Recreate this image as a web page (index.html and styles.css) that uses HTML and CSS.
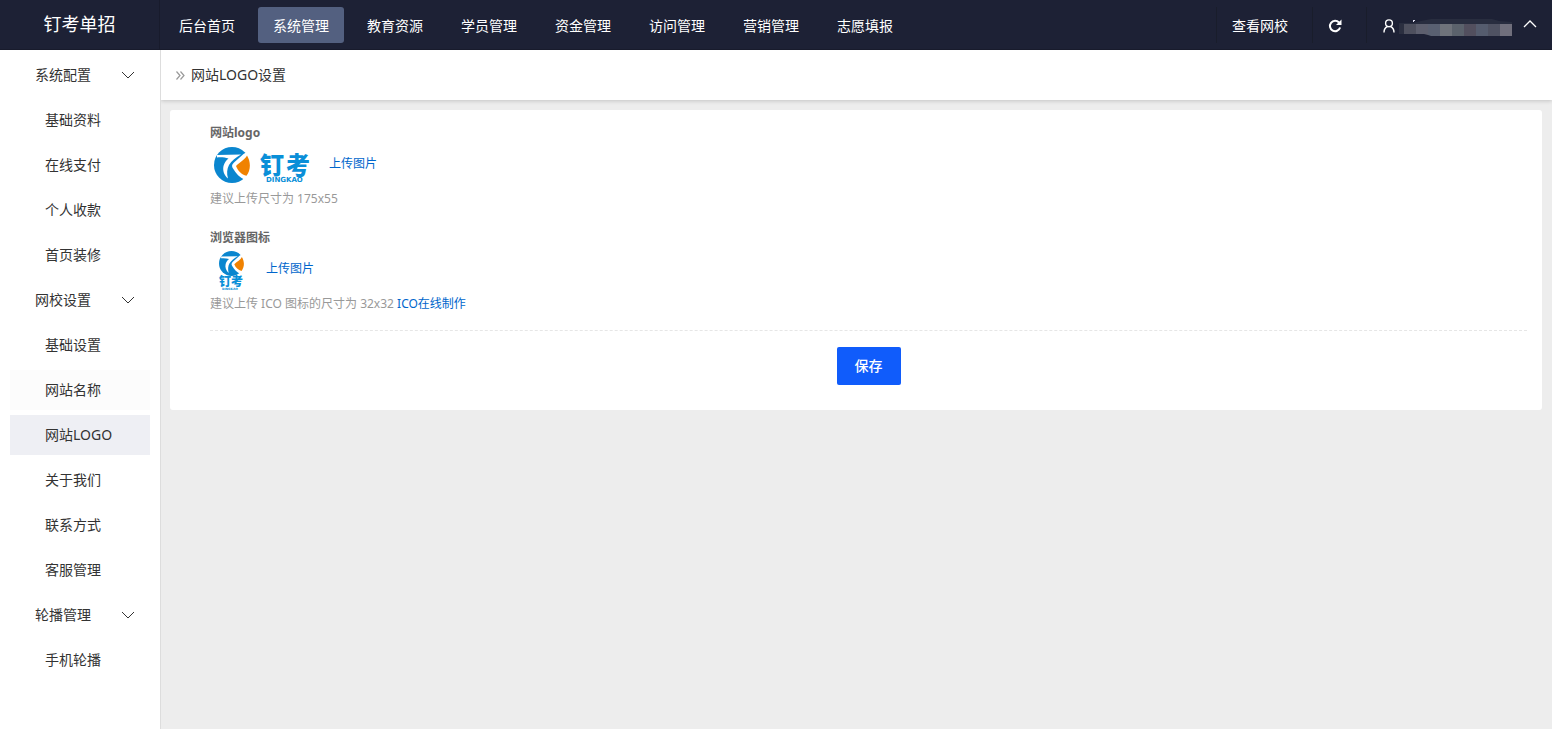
FILE: index.html
```html
<!DOCTYPE html>
<html lang="zh-CN">
<head>
<meta charset="utf-8">
<title>网站LOGO设置</title>
<link rel="stylesheet" href="styles.css">
</head>
<body>
<svg class="defs" aria-hidden="true">
  <symbol id="mark" viewBox="0 0 36 36">
    <circle cx="18" cy="18" r="18" fill="#0a86cf"/>
    <path d="M3 8 L27 7.500 C22 10.500 17.500 13.500 15 18 C13 22 12.500 26 14 31.500 C10 28 8.500 23.500 9.500 19 C10.500 15.500 12 13.500 14.500 11.500 C11 10.500 7 10 3 10.500 Z" fill="#fff"/>
    <path d="M29.500 7 L20 15.500 C17.800 17.500 17.500 19.500 19 21.500 C22 26.500 25.500 30.500 31 33 L37 29 L37 7 L32 5.500 Z" fill="#fff"/>
    <path d="M33 8.500 C31 12.500 26 15 22 19 C24 24 27.500 27.500 32.500 28.700 C36.800 23 37 15 33 8.500 Z" fill="#f08200"/>
  </symbol>
  <symbol id="down" viewBox="0 0 14 14">
    <path d="M1 4 L7 10 L13 4" fill="none" stroke="currentColor"/>
  </symbol>
</svg>

<header class="topbar">
  <div class="brand">钉考单招</div>
  <nav class="nav">
    <a href="#">后台首页</a>
    <a href="#" class="on">系统管理</a>
    <a href="#">教育资源</a>
    <a href="#">学员管理</a>
    <a href="#">资金管理</a>
    <a href="#">访问管理</a>
    <a href="#">营销管理</a>
    <a href="#">志愿填报</a>
  </nav>
  <div class="tools">
    <a href="#" class="tool">查看网校</a>
    <button type="button" class="tool" aria-label="刷新">
      <svg width="14" height="14" viewBox="0 0 14 14"><path d="M11 3.500 A5.200 5.200 0 1 0 12.100 8.500" fill="none" stroke="#fff" stroke-width="2"/><path d="M13.500 0.500 V6 H8 Z" fill="#fff"/></svg>
    </button>
    <button type="button" class="tool user" aria-label="账户">
      <svg width="12" height="14" viewBox="0 0 12 14"><g fill="none" stroke="#fff" stroke-width="1.400"><circle cx="6" cy="4.300" r="3.400"/><path d="M1 13.500 C1 10.500 2.500 8.300 4.600 7.500 M11 13.500 C11 10.500 9.500 8.300 7.400 7.500"/></g></svg>
      <svg class="mask" width="113" height="18" viewBox="0 0 113 18">
        <path d="M0 5 H14 L22 3 L32 1 H93 L100 3 L113 4 V8 H0 Z" fill="#282d3f"/>
        <path d="M0 6 H5 V16 H0 Z" fill="#2b2f40"/>
        <path d="M5 6 H17 V16 H5 Z" fill="#4e505e"/>
        <path d="M17 6 H29 V17 L25 16 H17 Z" fill="#5d5f6e"/>
        <path d="M29 6 H41 V18 H32 L29 17 Z" fill="#596071"/>
        <path d="M41 6 H53 V18 H41 Z" fill="#6f737b"/>
        <path d="M53 6 H65 V18 H53 Z" fill="#5b626c"/>
        <path d="M65 6 H77 V18 H65 Z" fill="#524f5e"/>
        <path d="M77 6 H89 V18 H77 Z" fill="#555c6e"/>
        <path d="M89 6 H101 V18 H89 Z" fill="#4f5262"/>
        <path d="M101 6 H113 V18 H101 Z" fill="#706f7c"/>
        <path d="M14 2 h2 v1 h-1 v1 h-1 Z" fill="#dde"/>
      </svg>
      <svg class="up" width="14" height="14" viewBox="0 0 14 14"><path d="M1 9 L7 3 L13 9" fill="none" stroke="#fff" stroke-width="1.300"/></svg>
    </button>
  </div>
</header>

<div class="body">
  <aside class="side">
    <button type="button" class="group">系统配置<svg width="14" height="14"><use href="#down"/></svg></button>
    <a href="#">基础资料</a>
    <a href="#">在线支付</a>
    <a href="#">个人收款</a>
    <a href="#">首页装修</a>
    <button type="button" class="group">网校设置<svg width="14" height="14"><use href="#down"/></svg></button>
    <a href="#">基础设置</a>
    <a href="#" class="faded">网站名称</a>
    <a href="#" class="on">网站LOGO</a>
    <a href="#">关于我们</a>
    <a href="#">联系方式</a>
    <a href="#">客服管理</a>
    <button type="button" class="group">轮播管理<svg width="14" height="14"><use href="#down"/></svg></button>
    <a href="#">手机轮播</a>
  </aside>

  <main class="main">
    <h1 class="crumb">
      <svg width="9" height="10" viewBox="0 0 9 10"><path d="M0.500 1.500 L4 5.500 L0.500 9.500 M4.500 1.500 L8 5.500 L4.500 9.500" fill="none" stroke="#999" stroke-width="1.200"/></svg>
      网站LOGO设置
    </h1>
    <form class="card">
      <section class="field">
        <h2>网站logo</h2>
        <div class="pic">
          <svg class="wide" width="111" height="42" viewBox="0 0 111 42" role="img" aria-label="钉考">
            <use href="#mark" x="4" y="4" width="36" height="36"/>
            <text class="logo-cn" x="50 76" y="31" font-size="24">钉考</text>
            <text class="logo-en" x="56" y="39" font-size="7">DINGKAO</text>
          </svg>
          <a href="#">上传图片</a>
        </div>
        <p>建议上传尺寸为 175x55</p>
      </section>
      <section class="field">
        <h2>浏览器图标</h2>
        <div class="pic">
          <svg class="small" width="40" height="42" viewBox="0 0 40 42" role="img" aria-label="钉考">
            <use href="#mark" x="9" y="3" width="25" height="25"/>
            <text class="logo-cn" x="9" y="38" font-size="12">钉考</text>
            <text class="logo-en" x="12" y="42" font-size="3">DINGKAO</text>
          </svg>
          <a href="#">上传图片</a>
        </div>
        <p>建议上传 ICO 图标的尺寸为 32x32 <a href="#">ICO在线制作</a></p>
      </section>
      <div class="actions"><button type="submit">保存</button></div>
    </form>
  </main>
</div>
</body>
</html>
```
FILE: styles.css
```css
* { box-sizing: border-box; }

body {
  margin: 0;
  min-height: 100vh;
  display: flex;
  flex-direction: column;
  font: 14px/20px "Noto Sans", "Noto Sans CJK SC", sans-serif;
  color: #333;
  background: #ededed;
}

a { color: inherit; text-decoration: none; }
button { font: inherit; color: inherit; border: 0; background: none; padding: 0; cursor: pointer; }
h1, h2, p { margin: 0; }
svg { flex: none; }
.defs { position: absolute; width: 0; height: 0; }

.topbar {
  display: flex;
  height: 50px;
  background: #1d2135;
  border-bottom: 1px solid #181b2c;
  color: #fff;
}
.brand {
  width: 160px;
  border-right: 1px solid #181b2c;
  font-size: 18px;
  line-height: 48px;
  text-align: center;
}
.nav { flex: 1; display: flex; align-items: center; gap: 8px; padding-left: 4px; }
.nav a { padding: 2px 15px 0; line-height: 34px; border-radius: 3px; }
.nav .on { background: #536080; }

.tools { display: flex; align-items: center; }
.tool {
  display: flex;
  align-items: center;
  height: 36px;
  padding: 2px 24px 0 15px;
  border-left: 1px solid #191d2b;
}
.user { padding: 2px 15px 0 16px; }
.mask { margin: 2px 11px 0 4px; }
.up { margin-bottom: 2px; }

.body { flex: 1; display: flex; }

.side {
  width: 161px;
  padding: 5px 10px;
  background: #fff;
  border-right: 1px solid #ddd;
}
.side a, .group {
  display: flex;
  align-items: center;
  width: 140px;
  height: 40px;
  margin-bottom: 5px;
  padding-left: 35px;
}
.side .group { justify-content: space-between; padding: 0 15px 0 25px; }
.side .on { background: #eeeff4; }
.side .faded { background: #fcfcfc; }

.main { flex: 1; }
.crumb {
  display: flex;
  align-items: center;
  gap: 6px;
  height: 50px;
  padding-left: 15px;
  background: #fff;
  box-shadow: 0 1px 4px rgba(0, 0, 0, 0.18);
  clip-path: inset(0 0 -8px 0);
  font-size: 14px;
  font-weight: 400;
}

.card {
  margin: 10px 10px 10px 9px;
  padding: 13px 15px 25px 40px;
  background: #fff;
  border-radius: 3px;
  font-size: 12px;
}
.field { margin-bottom: 15px; }
.field h2 { font-size: 12px; line-height: 20px; font-weight: 700; color: #666; }
.field p { line-height: 28px; color: #999; }
.field a { color: #0066cc; }
.pic { display: flex; align-items: center; height: 42px; }
.wide { margin-right: 8px; }
.small { margin-right: 16px; }
.logo-cn { font-family: "Noto Sans CJK SC", sans-serif; font-weight: 900; fill: #0a8fd8; }
.logo-en { font-family: "DejaVu Sans", sans-serif; font-weight: 700; fill: #0a8fd8; }

.field + .field { margin-bottom: 12px; }
.actions {
  border-top: 1px dashed #e6e6e6;
  padding-top: 16px;
  text-align: center;
}
.actions button {
  padding: 0 18px;
  font-size: 14px;
  line-height: 38px;
  border-radius: 2px;
  color: #fff;
  font-weight: 500;
  background: #105cfb;
}
```
